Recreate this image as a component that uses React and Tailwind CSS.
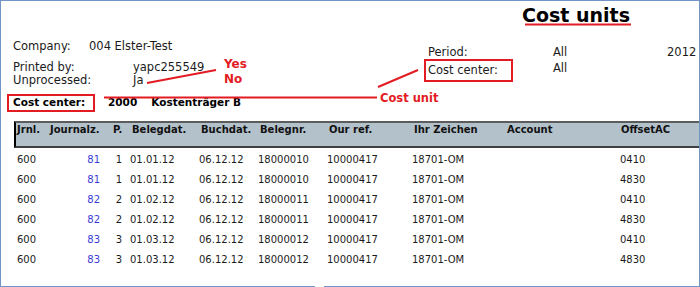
import React from 'react';

const rows = [
    { jrnl: '600', jz: '81', p: '1', beleg: '01.01.12', buch: '06.12.12', nr: '18000010', ref: '10000417', zeichen: '18701-OM', acc: '', off: '0410' },
    { jrnl: '600', jz: '81', p: '1', beleg: '01.01.12', buch: '06.12.12', nr: '18000010', ref: '10000417', zeichen: '18701-OM', acc: '', off: '4830' },
    { jrnl: '600', jz: '82', p: '2', beleg: '01.02.12', buch: '06.12.12', nr: '18000011', ref: '10000417', zeichen: '18701-OM', acc: '', off: '0410' },
    { jrnl: '600', jz: '82', p: '2', beleg: '01.02.12', buch: '06.12.12', nr: '18000011', ref: '10000417', zeichen: '18701-OM', acc: '', off: '4830' },
    { jrnl: '600', jz: '83', p: '3', beleg: '01.03.12', buch: '06.12.12', nr: '18000012', ref: '10000417', zeichen: '18701-OM', acc: '', off: '0410' },
    { jrnl: '600', jz: '83', p: '3', beleg: '01.03.12', buch: '06.12.12', nr: '18000012', ref: '10000417', zeichen: '18701-OM', acc: '', off: '4830' },
];

// shared column template for header and rows
const cols = 'grid grid-cols-[34px_58px_24px_69px_59px_69px_85px_93px_114px_1fr]';

const App = () => {
    return (
        <div
            className="relative w-[700px] h-[287px] bg-white flex flex-col border-l border-t border-r border-[#7295c8] text-[#1b1b1b] overflow-hidden"
            style={{ fontFamily: '"DejaVu Sans", Verdana, sans-serif' }}
        >
            {/* Title */}
            <div className="ml-[521px] mt-[3px] h-[22px] text-[19px] leading-[22px] font-bold text-black">
                Cost units
            </div>

            {/* Report parameters */}
            <div className="flex items-start mt-[13px] text-[11.5px]">
                <div className="w-[417px] ml-[6px] flex flex-col">
                    <div className="flex h-[14px] leading-[14px] pl-[6px]">
                        <span className="w-[76px]">Company:</span>
                        <span>004 Elster-Test</span>
                    </div>
                    <div className="flex h-[13px] leading-[13px] pl-[6px] mt-[8px]">
                        <span className="w-[120px]">Printed by:</span>
                        <span>yapc255549</span>
                    </div>
                    <div className="flex h-[13px] leading-[13px] pl-[6px]">
                        <span className="w-[120px]">Unprocessed:</span>
                        <span>Ja</span>
                    </div>
                    <div className="flex items-center mt-[7px] text-[10.5px] font-bold text-black">
                        <div className="w-[88px] h-[18px] border-2 border-[#e31b23] pl-[4px] flex items-center">
                            Cost center:
                        </div>
                        <span className="ml-[13px]">2000</span>
                        <span className="ml-[14px]">Kostenträger B</span>
                    </div>
                </div>

                <div className="flex flex-col mt-[6px]">
                    <div className="flex h-[14px] leading-[14px] pl-[4px]">
                        <span className="w-[125px]">Period:</span>
                        <span className="w-[114px]">All</span>
                        <span>2012</span>
                    </div>
                    <div className="flex items-start">
                        <div className="w-[89px] h-[23px] border-2 border-[#e31b23] pl-[2px] flex items-center">
                            Cost center:
                        </div>
                        <span className="ml-[40px] mt-[2px] leading-[14px]">All</span>
                    </div>
                </div>
            </div>

            {/* Booking table */}
            <div className="ml-[13px] mt-[9px] flex flex-col text-[10px]">
                <div className={`${cols} h-[27px] bg-[#b3c1cb] border-t-2 border-b-2 border-l-2 border-t-[#5c5c5c] border-b-[#3f3f3f] border-l-black font-bold text-[#111] leading-[12px] pt-[1px]`}>
                    <span className="pl-[1px]">Jrnl.</span>
                    <span>Journalz.</span>
                    <span className="pl-[5px]">P.</span>
                    <span>Belegdat.</span>
                    <span>Buchdat.</span>
                    <span>Belegnr.</span>
                    <span>Our ref.</span>
                    <span>Ihr Zeichen</span>
                    <span>Account</span>
                    <span>OffsetAC</span>
                </div>
                <div className="flex flex-col mt-[2px]">
                    {rows.map((r, i) => (
                        <div key={i} className={`${cols} h-[20px] leading-[20px]`}>
                            <span className="pl-[3px]">{r.jrnl}</span>
                            <span className="text-right pr-[6px] text-[#3a3ad2]">{r.jz}</span>
                            <span className="text-right pr-[8px]">{r.p}</span>
                            <span>{r.beleg}</span>
                            <span>{r.buch}</span>
                            <span>{r.nr}</span>
                            <span>{r.ref}</span>
                            <span>{r.zeichen}</span>
                            <span>{r.acc}</span>
                            <span className="pl-[1px]">{r.off}</span>
                        </div>
                    ))}
                </div>
            </div>

            {/* bottom edge, broken where the frame was cut */}
            <div className="mt-auto flex h-[1px]">
                <div className="w-[314px] border-t border-[#7295c8]" />
                <div className="w-[9px]" />
                <div className="flex-1 border-t border-[#7295c8]" />
            </div>

            {/* red annotations */}
            <svg className="absolute left-[-1px] top-[-1px] pointer-events-none" width="700" height="287">
                <line x1="525" y1="24.5" x2="631" y2="24.5" stroke="#e31b23" strokeWidth="2" />
                <line x1="147" y1="83" x2="216" y2="70" stroke="#e31b23" strokeWidth="2" />
                <line x1="104" y1="97.5" x2="377" y2="97.5" stroke="#e31b23" strokeWidth="2" />
                <line x1="378" y1="87" x2="418" y2="70" stroke="#e31b23" strokeWidth="2" />
            </svg>
            <span className="absolute left-[223px] top-[56px] text-[12px] leading-[14px] font-bold text-[#e31b23]">Yes</span>
            <span className="absolute left-[223px] top-[71px] text-[12px] leading-[14px] font-bold text-[#e31b23]">No</span>
            <span className="absolute left-[379px] top-[90px] text-[11.5px] leading-[14px] font-bold text-[#e31b23]">Cost unit</span>
        </div>
    );
};

export default App;
